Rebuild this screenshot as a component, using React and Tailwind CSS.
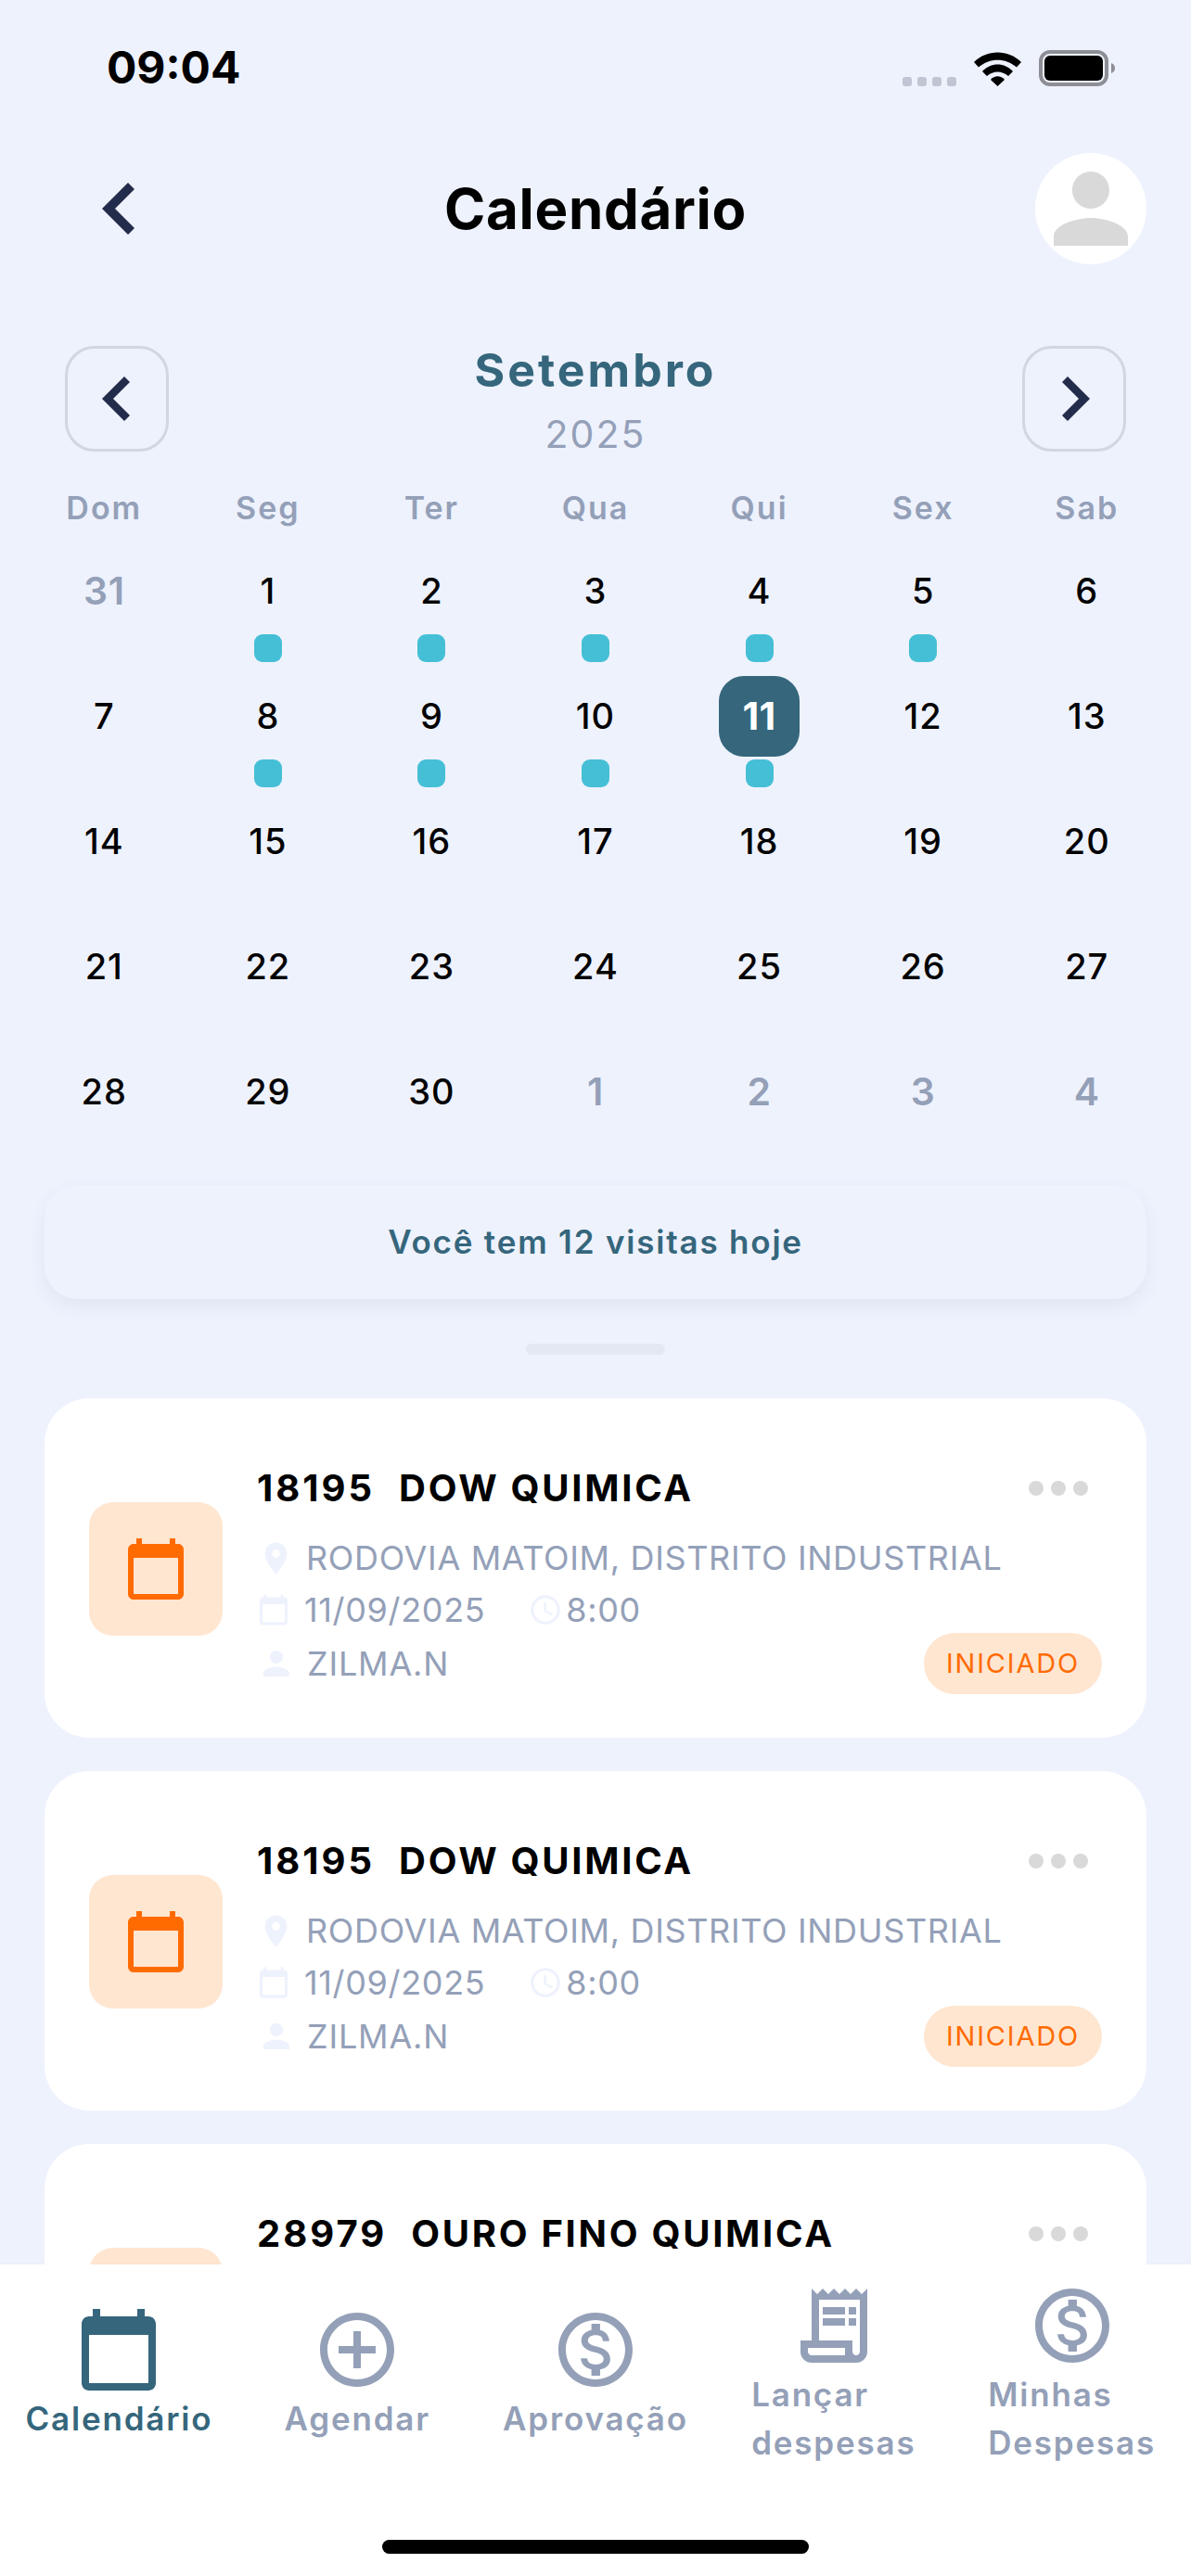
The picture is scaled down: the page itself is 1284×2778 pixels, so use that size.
import React from "react";

const PATHS = {
  calendar: "M20 3h-1V1h-2v2H7V1H5v2H4c-1.1 0-2 .9-2 2v16c0 1.1.9 2 2 2h16c1.1 0 2-.9 2-2V5c0-1.1-.9-2-2-2zm0 18H4V8h16v13z",
  person: "M12 12c2.21 0 4-1.79 4-4s-1.79-4-4-4-4 1.79-4 4 1.79 4 4 4zm0 2c-2.67 0-8 1.34-8 4v2h16v-2c0-2.66-5.33-4-8-4z",
  pin: "M12 2C8.13 2 5 5.13 5 9c0 5.25 7 13 7 13s7-7.75 7-13c0-3.87-3.13-7-7-7zm0 9.5c-1.38 0-2.5-1.12-2.5-2.5s1.12-2.5 2.5-2.5 2.5 1.12 2.5 2.5-1.12 2.5-2.5 2.5z",
  clock: "M11.99 2C6.47 2 2 6.48 2 12s4.47 10 9.99 10C17.52 22 22 17.52 22 12S17.52 2 11.99 2zM12 20c-4.42 0-8-3.58-8-8s3.58-8 8-8 8 3.58 8 8-3.58 8-8 8zm.5-13H11v6l5.25 3.15.75-1.23-4.5-2.67z",
  plus: "M13 7h-2v4H7v2h4v4h2v-4h4v-2h-4V7zm-1-5C6.48 2 2 6.48 2 12s4.48 10 10 10 10-4.48 10-10S17.52 2 12 2zm0 18c-4.41 0-8-3.59-8-8s3.59-8 8-8 8 3.59 8 8-3.59 8-8 8z",
  dollar: "M12 2C6.48 2 2 6.48 2 12s4.48 10 10 10 10-4.48 10-10S17.52 2 12 2zm0 18c-4.41 0-8-3.59-8-8s3.59-8 8-8 8 3.59 8 8-3.59 8-8 8zm.31-8.86c-1.77-.45-2.34-.94-2.34-1.67 0-.84.79-1.43 2.1-1.43 1.38 0 1.9.66 1.94 1.64h1.71c-.05-1.34-.87-2.57-2.49-2.97V5H10.9v1.69c-1.51.32-2.72 1.3-2.72 2.81 0 1.79 1.49 2.69 3.66 3.21 1.95.46 2.34 1.15 2.34 1.87 0 .53-.39 1.39-2.1 1.39-1.6 0-2.23-.72-2.32-1.64H8.04c.1 1.7 1.36 2.66 2.86 2.97V19h2.34v-1.67c1.52-.29 2.72-1.16 2.73-2.77-.01-2.2-1.9-2.96-3.66-3.42z",
  receipt: "M19.5 3.5L18 2l-1.5 1.5L15 2l-1.5 1.5L12 2l-1.5 1.5L9 2 7.5 3.5 6 2v14H3v3c0 1.66 1.34 3 3 3h12c1.66 0 3-1.34 3-3V2l-1.5 1.5zM15 20H6c-.55 0-1-.45-1-1v-1h10v2zm4-1c0 .55-.45 1-1 1s-1-.45-1-1v-3H8V5h11v14zM9 7h6v2H9zM16 7h2v2h-2zM9 10h6v2H9zM16 10h2v2h-2z",
};

function Icon({ name, className }) {
  return (
    <svg viewBox="0 0 24 24" fill="currentColor" className={className}>
      <path d={PATHS[name]} />
    </svg>
  );
}

const WEEKDAYS = ["Dom", "Seg", "Ter", "Qua", "Qui", "Sex", "Sab"];

const DAYS = [
  { n: 31, out: true }, { n: 1, dot: true }, { n: 2, dot: true }, { n: 3, dot: true }, { n: 4, dot: true }, { n: 5, dot: true }, { n: 6 },
  { n: 7 }, { n: 8, dot: true }, { n: 9, dot: true }, { n: 10, dot: true }, { n: 11, dot: true, selected: true }, { n: 12 }, { n: 13 },
  { n: 14 }, { n: 15 }, { n: 16 }, { n: 17 }, { n: 18 }, { n: 19 }, { n: 20 },
  { n: 21 }, { n: 22 }, { n: 23 }, { n: 24 }, { n: 25 }, { n: 26 }, { n: 27 },
  { n: 28 }, { n: 29 }, { n: 30 }, { n: 1, out: true }, { n: 2, out: true }, { n: 3, out: true }, { n: 4, out: true },
];

const VISITS = [
  { code: "18195", name: "DOW QUIMICA" },
  { code: "18195", name: "DOW QUIMICA" },
  { code: "28979", name: "OURO FINO QUIMICA" },
];

const TABS = [
  { icon: "calendar", label: ["Calendário"], active: true },
  { icon: "plus", label: ["Agendar"] },
  { icon: "dollar", label: ["Aprovação"] },
  { icon: "receipt", label: ["Lançar", "despesas"] },
  { icon: "dollar", label: ["Minhas", "Despesas"] },
];

function StatusBar() {
  return (
    <div className="flex h-[146px] items-center justify-between pl-[115px] pr-[82px]">
      <span className="text-[48px] leading-none font-bold text-black">09:04</span>
      <div className="flex items-end gap-[19px]">
        <div className="flex gap-[6px]">
          <div className="h-[10px] w-[10px] rounded-[3px] bg-[#bfc5d2]" />
          <div className="h-[10px] w-[10px] rounded-[3px] bg-[#bfc5d2]" />
          <div className="h-[10px] w-[10px] rounded-[3px] bg-[#bfc5d2]" />
          <div className="h-[10px] w-[10px] rounded-[3px] bg-[#bfc5d2]" />
        </div>
        <svg viewBox="0 0 51 37" className="h-[37px] w-[51px]" fill="#000">
          <path d="M0 11C14-3 37-3 51 11L46 16.5C34 6 17 6 5 16.5Z" />
          <path d="M9 21C18 11 33 11 42 21L37 26C30 20 21 20 14 26Z" />
          <path d="M18 30C22 25 29 25 33 30L25.5 37Z" />
        </svg>
        <svg viewBox="0 0 82 39" className="h-[39px] w-[82px]">
          <rect x="2" y="2" width="71" height="35" rx="10" fill="none" stroke="#8e8f96" strokeWidth="4" />
          <rect x="6" y="6" width="63" height="27" rx="6" fill="#000" />
          <path d="M78 14C81 15 82 17 82 19.5S81 24 78 25Z" fill="#8e8f96" />
        </svg>
      </div>
    </div>
  );
}

function Header() {
  return (
    <div className="mt-[19px] grid grid-cols-[1fr_auto_1fr] items-center px-[48px]">
      <svg viewBox="0 0 35 56" className="ml-[62px] h-[56px] w-[35px] text-[#232c4a]" fill="currentColor">
        <path d="M0 28L28 0L35 7L14 28L35 49L28 56Z" />
      </svg>
      <h1 className="text-[60px] leading-[72px] font-bold tracking-[0.7px] text-black">Calendário</h1>
      <div className="flex h-[120px] w-[120px] items-center justify-center justify-self-end rounded-full bg-white">
        <Icon name="person" className="h-[120px] w-[120px] text-[#d9d9d9]" />
      </div>
    </div>
  );
}

function MonthButton({ right }) {
  return (
    <button className="flex h-[114px] w-[112px] items-center justify-center rounded-[32px] border-[3px] border-[#d2d6e0]">
      <svg viewBox="0 0 30 48" className={right ? "ml-[3px] h-[48px] w-[30px] rotate-180 text-[#232c4a]" : "mr-[3px] h-[48px] w-[30px] text-[#232c4a]"} fill="currentColor">
        <path d="M0 24L24 0L30 6L12 24L30 42L24 48Z" />
      </svg>
    </button>
  );
}

function Calendar() {
  return (
    <div>
      <div className="mt-[88px] flex items-start justify-between px-[70px]">
        <MonthButton />
        <div className="-mt-[4px] flex flex-col items-center">
          <span className="text-[50px] leading-[60px] font-bold tracking-[3px] text-[#35667c]">Setembro</span>
          <span className="mt-[14px] text-[41px] leading-[50px] tracking-[2px] text-[#94a0b8]">2025</span>
        </div>
        <MonthButton right />
      </div>
      <div className="mt-[35px] grid grid-cols-7 px-[24px]">
        {WEEKDAYS.map((day) => (
          <span key={day} className="text-center text-[34px] leading-[40px] font-semibold tracking-[2px] text-[#94a0b8]">{day}</span>
        ))}
      </div>
      <div className="mt-[26px] grid grid-cols-7 px-[24px]">
        {DAYS.map((day, i) => (
          <div key={i} className="flex h-[135px] flex-col items-center">
            <div
              className={
                day.selected
                  ? "flex h-[87px] w-[87px] items-center justify-center rounded-[27px] bg-[#35667c] text-[41px] font-bold tracking-[0.5px] text-white"
                  : day.out
                    ? "flex h-[87px] w-[87px] items-center justify-center text-[41px] font-semibold tracking-[0.5px] text-[#94a0b8]"
                    : "flex h-[87px] w-[87px] items-center justify-center text-[38px] font-medium tracking-[1px] text-black"
              }
            >
              {day.n}
            </div>
            {day.dot && <div className="mt-[3px] h-[30px] w-[30px] rounded-[9px] bg-[#45bfd6]" />}
          </div>
        ))}
      </div>
    </div>
  );
}

function VisitCard({ code, name }) {
  return (
    <div className="flex h-[366px] shrink-0 items-start rounded-[48px] bg-white px-[48px] pt-[73px]">
      <div className="mt-[39px] flex h-[144px] w-[144px] shrink-0 items-center justify-center rounded-[26px] bg-[#ffe6d1]">
        <Icon name="calendar" className="h-[72px] w-[72px] text-[#ff6b00]" />
      </div>
      <div className="ml-[37px] flex-1">
        <div className="flex h-[48px] items-center justify-between pr-[15px]">
          <div className="flex whitespace-nowrap text-[40px] leading-[48px] font-bold text-black">
            <span className="tracking-[3px]">{code}</span>
            <span className="ml-[26px] tracking-[2.7px]">{name}</span>
          </div>
          <div className="flex gap-[8px]">
            <div className="h-[16px] w-[16px] rounded-full bg-[#d9d9d9]" />
            <div className="h-[16px] w-[16px] rounded-full bg-[#d9d9d9]" />
            <div className="h-[16px] w-[16px] rounded-full bg-[#d9d9d9]" />
          </div>
        </div>
        <div className="mt-[31px] flex h-[40px] items-center text-[36px] tracking-[0.65px] text-[#94a0b8]">
          <Icon name="pin" className="h-[41px] w-[41px] text-[#eef2fd]" />
          <span className="ml-[12px]">RODOVIA MATOIM, DISTRITO INDUSTRIAL</span>
        </div>
        <div className="mt-[16px] flex h-[40px] items-center text-[36px] tracking-[0.65px] text-[#94a0b8]">
          <Icon name="calendar" className="h-[36px] w-[36px] text-[#eef2fd]" />
          <span className="ml-[15px]">11/09/2025</span>
          <Icon name="clock" className="ml-[46px] h-[38px] w-[38px] text-[#eef2fd]" />
          <span className="ml-[3px]">8:00</span>
        </div>
        <div className="mt-[5px] flex items-center justify-between text-[36px] tracking-[0.8px] text-[#94a0b8]">
          <div className="flex items-center">
            <Icon name="person" className="h-[42px] w-[42px] text-[#eef2fd]" />
            <span className="ml-[12px]">ZILMA.N</span>
          </div>
          <div className="flex h-[66px] w-[192px] items-center justify-center rounded-full bg-[#ffe6d1] text-[29px] font-normal tracking-[1.8px] text-[#ff6b00]">
            INICIADO
          </div>
        </div>
      </div>
    </div>
  );
}

function TabBar() {
  return (
    <div className="h-[336px] shrink-0 bg-white shadow-[0_-1px_2px_rgba(0,0,0,0.02)]">
      <div className="grid h-[236px] grid-cols-5">
        {TABS.map((tab, i) => (
          <div key={i} className={tab.active ? "flex flex-col items-center justify-center text-[#35667c]" : "flex flex-col items-center justify-center text-[#94a0b8]"}>
            <Icon name={tab.icon} className="h-[96px] w-[96px]" />
            <div className="text-[35px] leading-[52px] font-semibold tracking-[1.8px] whitespace-nowrap">
              {tab.label.map((line) => (
                <div key={line}>{line}</div>
              ))}
            </div>
          </div>
        ))}
      </div>
      <div className="mx-auto mt-[61px] h-[15px] w-[460px] rounded-full bg-black" />
    </div>
  );
}

export default function App() {
  return (
    <div className="flex h-[2778px] w-[1284px] flex-col overflow-hidden bg-[#eef2fd] font-['Inter',sans-serif]">
      <div className="min-h-0 flex-1 overflow-hidden">
        <StatusBar />
        <Header />
        <Calendar />
        <div className="mx-[48px] mt-[9px] flex h-[123px] items-center justify-center rounded-[36px] bg-[#eef2fd] text-[35px] font-semibold tracking-[1.8px] text-[#35667c] shadow-[0_8px_20px_rgba(50,70,110,0.07)]">
          Você tem 12 visitas hoje
        </div>
        <div className="mx-auto mt-[48px] h-[12px] w-[150px] rounded-full bg-[#e3e8f3]" />
        <div className="mx-[48px] mt-[47px] flex flex-col gap-[36px]">
          {VISITS.map((visit, i) => (
            <VisitCard key={i} code={visit.code} name={visit.name} />
          ))}
        </div>
      </div>
      <TabBar />
    </div>
  );
}
